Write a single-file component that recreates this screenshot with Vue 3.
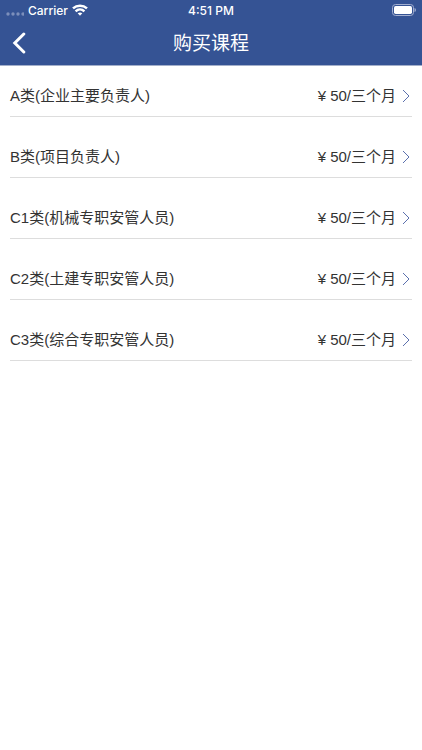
<template>
  <div class="page">
    <header class="header">
      <div class="status-bar">
        <div class="carrier">
          <svg class="signal" width="18" height="4" viewBox="0 0 18 4" aria-hidden="true">
            <circle v-for="n in 4" :key="n" :cx="n * 5 - 3" cy="2" r="1.7" />
          </svg>
          <span>Carrier</span>
          <svg width="16" height="12" viewBox="0 0 16 12" aria-hidden="true">
            <g fill="none" stroke="#fff" stroke-width="2.5">
              <path d="M1 4.4C5 .7 11 .7 15 4.4" />
              <path d="M3.6 7.3C6.1 5 9.9 5 12.4 7.3" />
            </g>
            <path d="M5.7 9.3C7 8.1 9 8.1 10.3 9.3L8 11.7Z" fill="#fff" />
          </svg>
        </div>
        <span class="time">4:51 PM</span>
        <svg class="battery" width="24" height="12" viewBox="0 0 24 12" aria-hidden="true">
          <rect x=".5" y=".5" width="21" height="11" rx="3" fill="none" stroke="#a3afd0" />
          <rect x="2" y="2" width="18" height="8" rx="1.7" fill="#fff" />
          <path d="M22.5 4C24.4 4.6 24.4 7.4 22.5 8Z" fill="#a3afd0" />
        </svg>
      </div>
      <nav class="nav-bar">
        <button class="back" type="button" aria-label="返回">
          <svg width="14" height="22" viewBox="0 0 14 22" aria-hidden="true">
            <path d="M11.8 2L2.8 11L11.8 20" fill="none" stroke="#fff" stroke-width="3" stroke-linecap="round" />
          </svg>
        </button>
        <h1>购买课程</h1>
      </nav>
    </header>

    <main>
      <ul class="course-list">
        <li v-for="course in courses" :key="course.name">
          <a class="course" href="#">
            <span>{{ course.name }}</span>
            <span class="price">
              ¥ {{ course.price }}/三个月
              <svg width="8" height="14" viewBox="0 0 8 14" aria-hidden="true">
                <path d="M1 1L7 7L1 13" fill="none" stroke="#5b70ad" stroke-width="1" />
              </svg>
            </span>
          </a>
        </li>
      </ul>
    </main>
  </div>
</template>

<script setup>
const courses = [
  { name: 'A类(企业主要负责人)', price: 50 },
  { name: 'B类(项目负责人)', price: 50 },
  { name: 'C1类(机械专职安管人员)', price: 50 },
  { name: 'C2类(土建专职安管人员)', price: 50 },
  { name: 'C3类(综合专职安管人员)', price: 50 },
];
</script>

<style>
body {
  margin: 0;
  background: #fff;
}
</style>

<style scoped>
.page {
  color: #333;
  font-family: "Liberation Sans", "Noto Sans CJK SC", sans-serif;
  font-size: 15px;
}

.header {
  background: #355394;
  color: #fff;
  border-bottom: 1px solid #a3afca;
}

.status-bar {
  display: grid;
  grid-template-columns: 1fr auto 1fr;
  align-items: center;
  height: 20px;
  padding: 0 6px;
  font-family: Inter, sans-serif;
  font-size: 12px;
  font-weight: 500;
}

.carrier {
  display: flex;
  align-items: center;
  gap: 4px;
}

.signal {
  margin-top: 8px;
  fill: #7c8fbb;
}

.battery {
  justify-self: end;
}

.nav-bar {
  display: grid;
  grid-template-columns: 48px 1fr 48px;
  align-items: center;
  height: 45px;
}

.back {
  display: flex;
  align-items: center;
  height: 44px;
  padding: 0 12px;
  border: 0;
  background: none;
  cursor: pointer;
}

h1 {
  margin: 0;
  padding-top: 2px;
  text-align: center;
  font-size: 19px;
  font-weight: 400;
  line-height: 28px;
}

.course-list {
  margin: 0;
  padding: 0 10px;
  list-style: none;
}

.course {
  display: flex;
  align-items: center;
  justify-content: space-between;
  padding: 19px 0 9px;
  border-bottom: 1px solid #ddd;
  color: inherit;
  line-height: 22px;
  text-decoration: none;
}

.course-list li + li .course {
  padding-top: 29px;
}

.price {
  display: flex;
  align-items: center;
  gap: 6px;
  padding-right: 2px;
}
</style>
